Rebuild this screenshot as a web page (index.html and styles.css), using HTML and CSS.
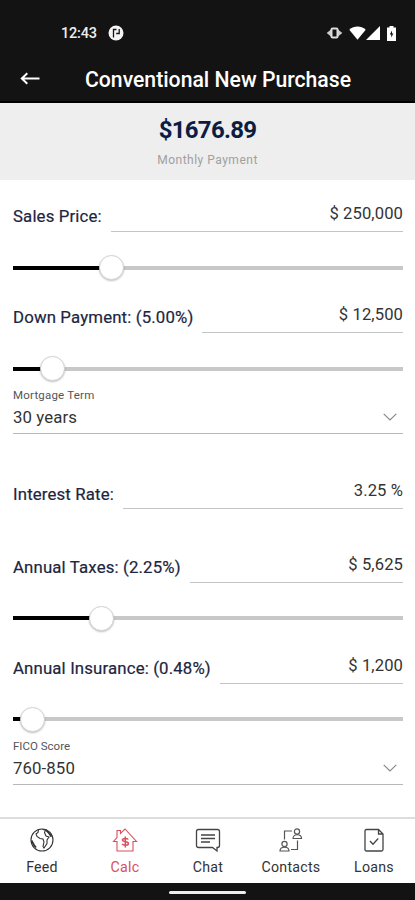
FILE: index.html
```html
<!DOCTYPE html>
<html lang="en">
<head>
    <meta charset="UTF-8">
    <meta name="viewport" content="width=device-width, initial-scale=1">
    <title>Conventional New Purchase</title>
    <link rel="stylesheet" href="styles.css">
</head>
<body>
    <!-- Header -->
    <header class="header">
        <div class="status-bar">
            <span class="time">12:43</span>
            <svg class="app-icon" width="16" height="16" viewBox="0 0 16 16">
                <circle cx="8" cy="8" r="7.5" fill="#f4f4f4"/>
                <path d="M5.500 12.500V4.500H8.500M8.200 8.500h3V4" fill="none" stroke="#131313" stroke-width="1.300"/>
            </svg>
            <div class="status-icons">
                <svg width="17" height="14" viewBox="0 0 17 14">
                    <path d="M5 3.500.7 7 5 10.500zM12 3.500l4.300 3.500-4.300 3.500z" fill="#ccc"/>
                    <rect x="5.500" y="2.500" width="6" height="9" rx="1" fill="#131313" stroke="#ddd" stroke-width="2"/>
                </svg>
                <svg width="17" height="14" viewBox="0 0 17 14">
                    <path d="M.3 3.7C5-.6 12-.6 16.700 3.700L8.500 13.700z" fill="#fff"/>
                </svg>
                <svg width="14" height="14" viewBox="0 0 14 14">
                    <path d="M14 0v14H0z" fill="#fff"/>
                </svg>
                <svg class="battery" width="9" height="15" viewBox="0 0 9 15">
                    <path d="M2.500 0h4v1.500H9V15H0V1.500h2.500z" fill="#fff"/>
                    <path d="M5 4.500 2.800 8.500H4.200V11.500L6.400 7.500H5z" fill="#131313"/>
                </svg>
            </div>
        </div>
        <div class="title-bar">
            <svg class="back" width="20" height="14" viewBox="0 0 20 14" fill="none" stroke="#fff" stroke-width="2">
                <path d="M19.500 6.500H1.500M7.300 1.200 1.800 6.500l5.500 5.300"/>
            </svg>
            <h1>Conventional New Purchase</h1>
        </div>
    </header>

    <!-- Monthly Payment -->
    <section class="summary">
        <div class="amount">$1676.89</div>
        <div class="caption">Monthly Payment</div>
    </section>

    <main class="form">
        <div class="field">
            <label>Sales Price:</label>
            <span class="value">$ 250,000</span>
        </div>
        <div class="slider" style="--pos: 98px"><span class="thumb"></span></div>

        <div class="field">
            <label>Down Payment: (5.00%)</label>
            <span class="value">$ 12,500</span>
        </div>
        <div class="slider" style="--pos: 39.500px"><span class="thumb"></span></div>

        <div class="select">
            <div class="select-label">Mortgage Term</div>
            <div class="select-value">30 years
                <svg width="14" height="8" viewBox="0 0 14 8" fill="none" stroke="#888" stroke-width="1.200"><path d="m.7.9 6.300 6 6.300-6"/></svg>
            </div>
        </div>

        <div class="field rate">
            <label>Interest Rate:</label>
            <span class="value">3.25 %</span>
        </div>

        <div class="field taxes">
            <label>Annual Taxes: (2.25%)</label>
            <span class="value">$ 5,625</span>
        </div>
        <div class="slider" style="--pos: 88px"><span class="thumb"></span></div>

        <div class="field">
            <label>Annual Insurance: (0.48%)</label>
            <span class="value">$ 1,200</span>
        </div>
        <div class="slider" style="--pos: 19px"><span class="thumb"></span></div>

        <div class="select">
            <div class="select-label fico">FICO Score</div>
            <div class="select-value">760-850
                <svg width="14" height="8" viewBox="0 0 14 8" fill="none" stroke="#888" stroke-width="1.200"><path d="m.7.9 6.300 6 6.300-6"/></svg>
            </div>
        </div>
    </main>

    <!-- Bottom tabs -->
    <nav class="tabs">
        <a class="tab">
            <svg width="26" height="26" viewBox="0 0 26 26" fill="none" stroke="#333" stroke-width="1.100">
                <circle cx="13" cy="13" r="11"/>
                <path d="M9.500 2.800 9 5.500 7 7l1 2.500 3 2 3 .5 1 3-1 4.500 1 1.500 3-4.500v-3.500l2-3-3-1-1.500-3.500 1-2.500-3-.5"/>
                <path d="M17 3.200l3 3 2.500 3.500M2.500 13.500l2.500 4.500 2 2.500" stroke-width="1.800"/>
            </svg>
            Feed
        </a>
        <a class="tab active">
            <svg width="26" height="26" viewBox="0 0 26 26" fill="none" stroke="#d8505e" stroke-width="1.100">
                <path d="M5 14.500H1.500L5 10.500V3.500h3.500v3L13 2l11.500 12.500H21V24H5z"/>
                <path d="M16.200 12.500c-.6-1.300-5.800-1.700-5.800.6 0 2.500 6 1 6 3.400 0 2.500-5.400 2.100-6.200.4M13.300 9.500v11" stroke-width="1.500"/>
            </svg>
            Calc
        </a>
        <a class="tab">
            <svg width="26" height="26" viewBox="0 0 26 26" fill="none" stroke="#444" stroke-width="1.300">
                <path d="M3.500 2.500h19q2 0 2 2v14q0 2-2 2H22v3.500l-4.500-3.500h-14q-2 0-2-2v-14q0-2 2-2z"/>
                <path d="M6 8h14M6 11.500h14M6 15h9"/>
            </svg>
            Chat
        </a>
        <a class="tab">
            <svg width="26" height="26" viewBox="0 0 26 26" fill="none" stroke="#555" stroke-width="1.200">
                <circle cx="19" cy="4.500" r="2.600"/>
                <path d="M15 11.500c0-5 8.500-5 8.500 0z"/>
                <circle cx="6.500" cy="17" r="2.600"/>
                <path d="M2 24c0-5 9-5 9 0z"/>
                <path d="M14 4H6.500v8.500M13 22.500h6.500V13.500"/>
            </svg>
            Contacts
        </a>
        <a class="tab">
            <svg width="26" height="26" viewBox="0 0 26 26" fill="none" stroke="#444" stroke-width="1.300">
                <path d="M5.500 2.500h12l4.500 4.500v15.500q0 1.500-1.500 1.500h-15Q4 24 4 22.500V4q0-1.500 1.500-1.500zM17.500 2.500V7H22"/>
                <path d="m9 14 3 3.200 5.200-5.700"/>
            </svg>
            Loans
        </a>
    </nav>
    <div class="gesture-bar"><span></span></div>
</body>
</html>
```

FILE: styles.css
```css
* {
    box-sizing: border-box;
}

body {
    margin: 0;
    height: 900px;
    display: flex;
    flex-direction: column;
    font-family: Roboto, sans-serif;
    background-color: #fff;
    color: #333;
    overflow: hidden;
}

/* Header */
.header {
    height: 103px;
    background-color: #131313;
    border-bottom: 2px solid #000;
    color: #fff;
}

.status-bar {
    display: flex;
    align-items: center;
    height: 56px;
    padding: 10px 19px 0 61px;
}

.time {
    width: 47px;
    font-size: 14.5px;
    font-weight: 500;
    letter-spacing: -0.2px;
    color: #eee;
}

.status-icons {
    display: flex;
    align-items: center;
    margin-left: auto;
}

.status-icons svg:nth-child(2) {
    margin-left: 6px;
}

.status-icons .battery {
    margin-left: 7px;
}

.title-bar {
    display: flex;
    align-items: center;
    height: 45px;
    padding-left: 20px;
}

.title-bar h1 {
    margin: 2px 0 0 45px;
    font-size: 21.2px;
    font-weight: 500;
    line-height: 24px;
    white-space: nowrap;
}

/* Summary */
.summary {
    height: 77px;
    padding-top: 13px;
    background-color: #eee;
    text-align: center;
}

.amount {
    font-size: 24px;
    font-weight: 700;
    line-height: 28px;
    letter-spacing: -0.7px;
    color: #0c1d43;
}

.caption {
    margin-top: 9px;
    font-size: 12px;
    line-height: 14px;
    letter-spacing: 0.5px;
    color: #a0a0a0;
}

/* Form */
.form {
    height: 637px;
    padding: 22px 12px 0 13px;
}

.field {
    display: flex;
    align-items: flex-start;
    gap: 9px;
    height: 30px;
    white-space: nowrap;
}

.field label {
    padding-top: 4px;
    font-size: 16.8px;
    line-height: 20px;
    letter-spacing: 0.15px;
    -webkit-text-stroke: 0.2px #1d2540;
    color: #1d2540;
}

.value {
    flex: 1;
    height: 30px;
    padding-top: 1px;
    border-bottom: 1.5px solid #c4c4c4;
    font-size: 16.6px;
    line-height: 22px;
    letter-spacing: 0.1px;
    text-align: right;
    color: #333;
}

/* Slider */
.slider {
    display: flex;
    align-items: center;
    height: 25px;
    margin: 23px 0;
    background: linear-gradient(#000, #000) left center / var(--pos) 4px no-repeat,
                linear-gradient(#c8c8c8, #c8c8c8) left center / 100% 4px no-repeat;
}

.thumb {
    width: 25px;
    height: 25px;
    margin-left: calc(var(--pos) - 12.5px);
    border: 1px solid #d4d4d4;
    border-radius: 50%;
    background-color: #fff;
    box-shadow: 0 1px 2px rgba(0, 0, 0, 0.25);
}

/* Select */
.select {
    height: 53px;
    margin-top: -23px;
    padding-top: 7px;
    border-bottom: 1.5px solid #b8b8b8;
}

.select-label {
    font-size: 11.5px;
    line-height: 14px;
    letter-spacing: 0.2px;
    color: #555;
}

.select-label.fico {
    letter-spacing: 0;
}

.select-value {
    display: flex;
    align-items: center;
    justify-content: space-between;
    padding: 5px 6px 0 0;
    font-size: 16.8px;
    line-height: 20px;
    letter-spacing: 0.1px;
}

.rate {
    margin-top: 45px;
}

.rate label {
    padding-top: 5px;
}

.taxes {
    margin-top: 43.5px;
}

/* Tabs */
.tabs {
    display: flex;
    height: 66px;
    border-top: 2px solid #ddd;
}

.tab {
    flex: 1;
    display: flex;
    flex-direction: column;
    align-items: center;
    padding: 8px 0 0 1px;
    font-size: 14.2px;
    line-height: 28px;
    letter-spacing: 0.25px;
    color: #333;
}

.tab.active {
    color: #d8505e;
}

.gesture-bar {
    display: flex;
    align-items: center;
    justify-content: center;
    height: 17px;
    padding-top: 2px;
    background-color: #131313;
}

.gesture-bar span {
    width: 77px;
    height: 3px;
    border-radius: 2px;
    background-color: #eee;
}
```
